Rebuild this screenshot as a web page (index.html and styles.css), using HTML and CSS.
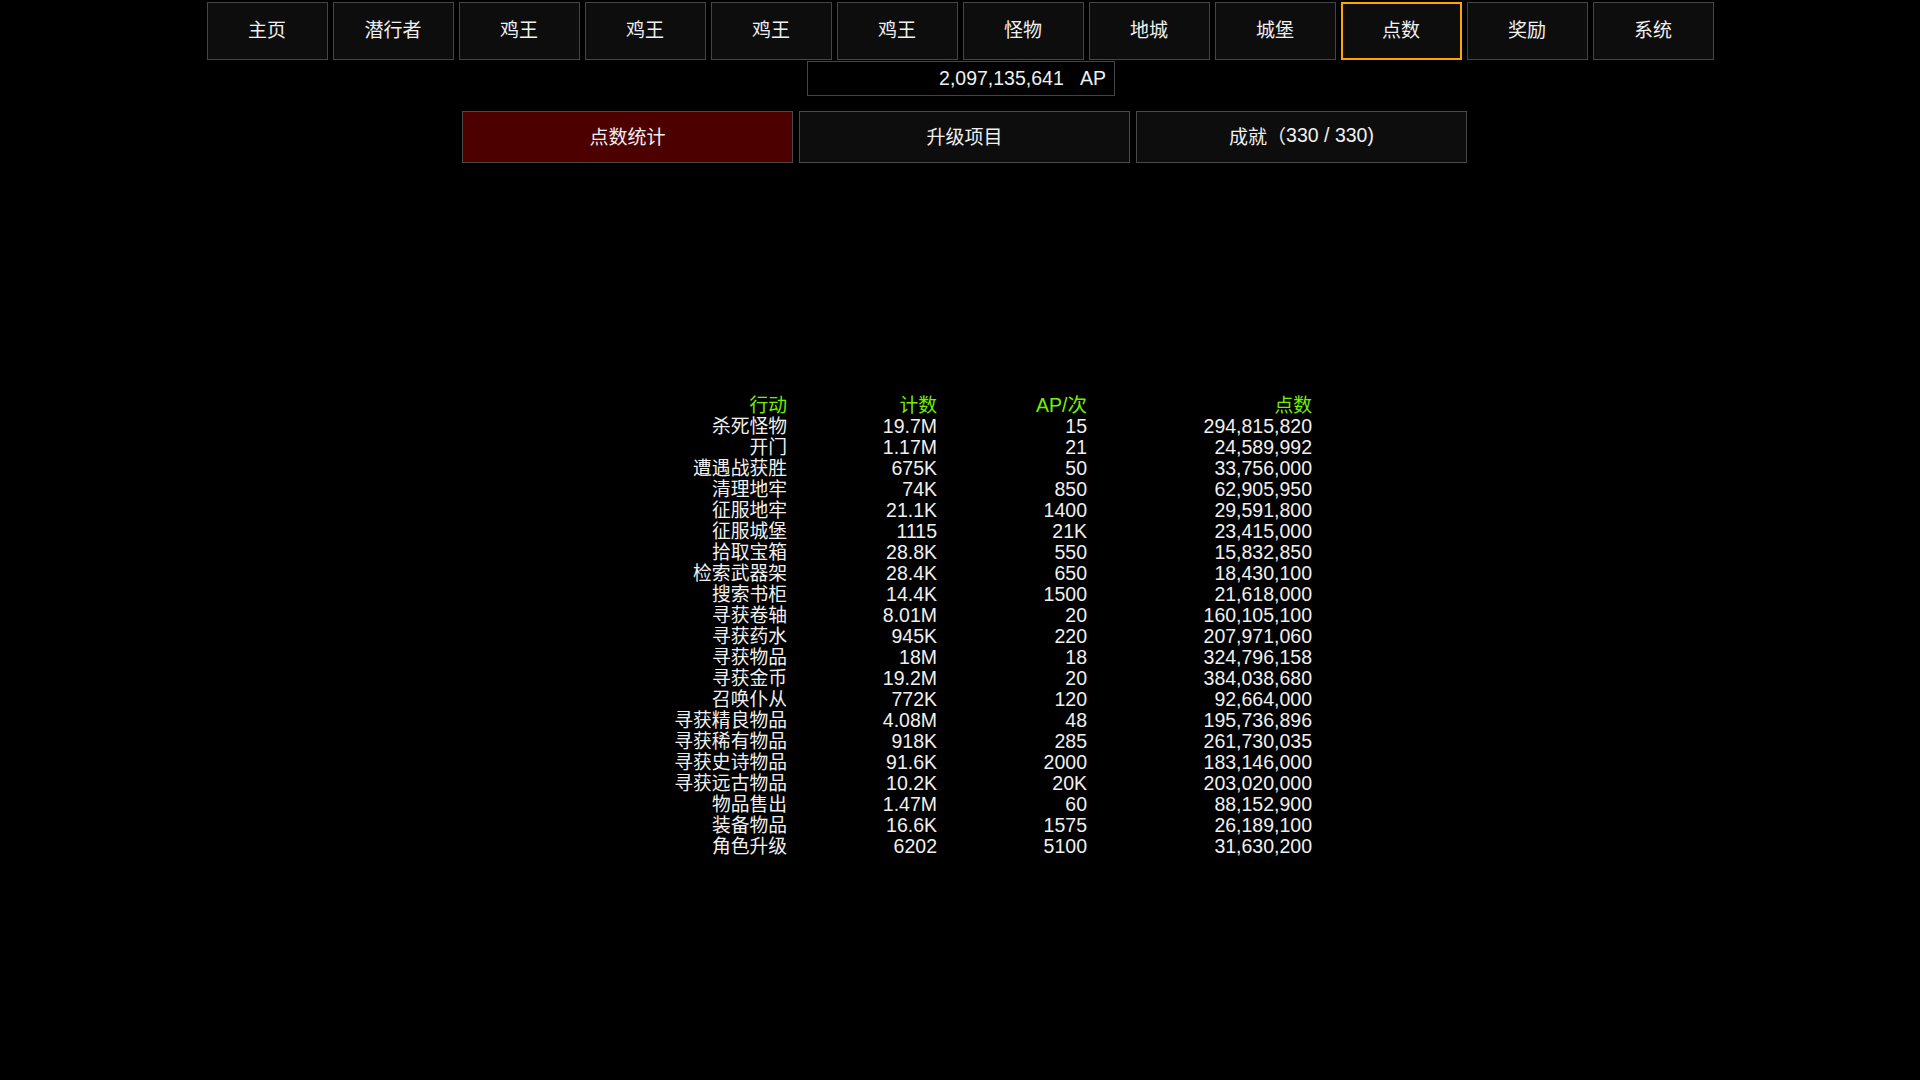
FILE: index.html
```html
<!DOCTYPE html>
<html lang="zh">
<head>
<meta charset="utf-8">
<title>点数</title>
<link rel="stylesheet" href="styles.css">
</head>
<body>
<nav class="nav">
  <div class="nav-btn">主页</div>
  <div class="nav-btn">潜行者</div>
  <div class="nav-btn">鸡王</div>
  <div class="nav-btn">鸡王</div>
  <div class="nav-btn">鸡王</div>
  <div class="nav-btn">鸡王</div>
  <div class="nav-btn">怪物</div>
  <div class="nav-btn">地城</div>
  <div class="nav-btn">城堡</div>
  <div class="nav-btn active">点数</div>
  <div class="nav-btn">奖励</div>
  <div class="nav-btn">系统</div>
</nav>
<div class="ap-row"><div class="ap-box">2,097,135,641&nbsp;&nbsp;&nbsp;AP</div></div>
<div class="tabs">
  <div class="tab selected">点数统计</div>
  <div class="tab">升级项目</div>
  <div class="tab">成就（<span class="num">330 / 330)</span></div>
</div>
<div class="stats">
  <div class="h">行动</div><div class="h">计数</div><div class="h n">AP/次</div><div class="h">点数</div>
  <div>杀死怪物</div><div class="n">19.7M</div><div class="n">15</div><div class="n">294,815,820</div>
  <div>开门</div><div class="n">1.17M</div><div class="n">21</div><div class="n">24,589,992</div>
  <div>遭遇战获胜</div><div class="n">675K</div><div class="n">50</div><div class="n">33,756,000</div>
  <div>清理地牢</div><div class="n">74K</div><div class="n">850</div><div class="n">62,905,950</div>
  <div>征服地牢</div><div class="n">21.1K</div><div class="n">1400</div><div class="n">29,591,800</div>
  <div>征服城堡</div><div class="n">1115</div><div class="n">21K</div><div class="n">23,415,000</div>
  <div>拾取宝箱</div><div class="n">28.8K</div><div class="n">550</div><div class="n">15,832,850</div>
  <div>检索武器架</div><div class="n">28.4K</div><div class="n">650</div><div class="n">18,430,100</div>
  <div>搜索书柜</div><div class="n">14.4K</div><div class="n">1500</div><div class="n">21,618,000</div>
  <div>寻获卷轴</div><div class="n">8.01M</div><div class="n">20</div><div class="n">160,105,100</div>
  <div>寻获药水</div><div class="n">945K</div><div class="n">220</div><div class="n">207,971,060</div>
  <div>寻获物品</div><div class="n">18M</div><div class="n">18</div><div class="n">324,796,158</div>
  <div>寻获金币</div><div class="n">19.2M</div><div class="n">20</div><div class="n">384,038,680</div>
  <div>召唤仆从</div><div class="n">772K</div><div class="n">120</div><div class="n">92,664,000</div>
  <div>寻获精良物品</div><div class="n">4.08M</div><div class="n">48</div><div class="n">195,736,896</div>
  <div>寻获稀有物品</div><div class="n">918K</div><div class="n">285</div><div class="n">261,730,035</div>
  <div>寻获史诗物品</div><div class="n">91.6K</div><div class="n">2000</div><div class="n">183,146,000</div>
  <div>寻获远古物品</div><div class="n">10.2K</div><div class="n">20K</div><div class="n">203,020,000</div>
  <div>物品售出</div><div class="n">1.47M</div><div class="n">60</div><div class="n">88,152,900</div>
  <div>装备物品</div><div class="n">16.6K</div><div class="n">1575</div><div class="n">26,189,100</div>
  <div>角色升级</div><div class="n">6202</div><div class="n">5100</div><div class="n">31,630,200</div>
</div>
</body>
</html>
```
FILE: styles.css
```css
html, body {
  margin: 0;
  padding: 0;
  background: #000;
  color: #f0f0f0;
  font-family: "Liberation Sans", "Noto Sans CJK SC", sans-serif;
  height: 100%;
}
body {
  padding-top: 2px;
  box-sizing: border-box;
}
.nav {
  display: flex;
  justify-content: center;
  gap: 5px;
}
.nav-btn {
  width: 121px;
  height: 58px;
  box-sizing: border-box;
  border: 1px solid #454545;
  background: #0d0d0d;
  display: flex;
  align-items: center;
  justify-content: center;
  font-size: 19px;
  padding-bottom: 5px;
  color: #f0f0f0;
}
.nav-btn.active {
  border: 2px solid #ffa500;
}
.ap-row {
  display: flex;
  justify-content: center;
  margin-top: 1px;
}
.ap-box {
  width: 308px;
  height: 35px;
  box-sizing: border-box;
  border: 1px solid #444;
  background: #000;
  text-align: right;
  padding-right: 8px;
  line-height: 33px;
  font-size: 19.5px;
  margin-left: 2px;
}
.tabs {
  display: flex;
  justify-content: center;
  gap: 6px;
  margin-top: 15px;
  padding-left: 9px;
}
.tab {
  width: 331px;
  height: 52px;
  box-sizing: border-box;
  border: 1px solid #4a4a4a;
  background: #0d0d0d;
  display: flex;
  align-items: center;
  justify-content: center;
  font-size: 19px;
  padding-bottom: 3px;
}
.tab .num {
  font-size: 19.5px;
}
.tab.selected {
  background: #4d0000;
}
.stats {
  display: grid;
  grid-template-columns: 179px 150px 150px 225px;
  width: 704px;
  margin: 232px auto 0;
  font-size: 18.8px;
  line-height: 21px;
  text-align: right;
}
.stats .n {
  font-size: 19.5px;
}
.stats .h {
  color: #72f000;
}
```
